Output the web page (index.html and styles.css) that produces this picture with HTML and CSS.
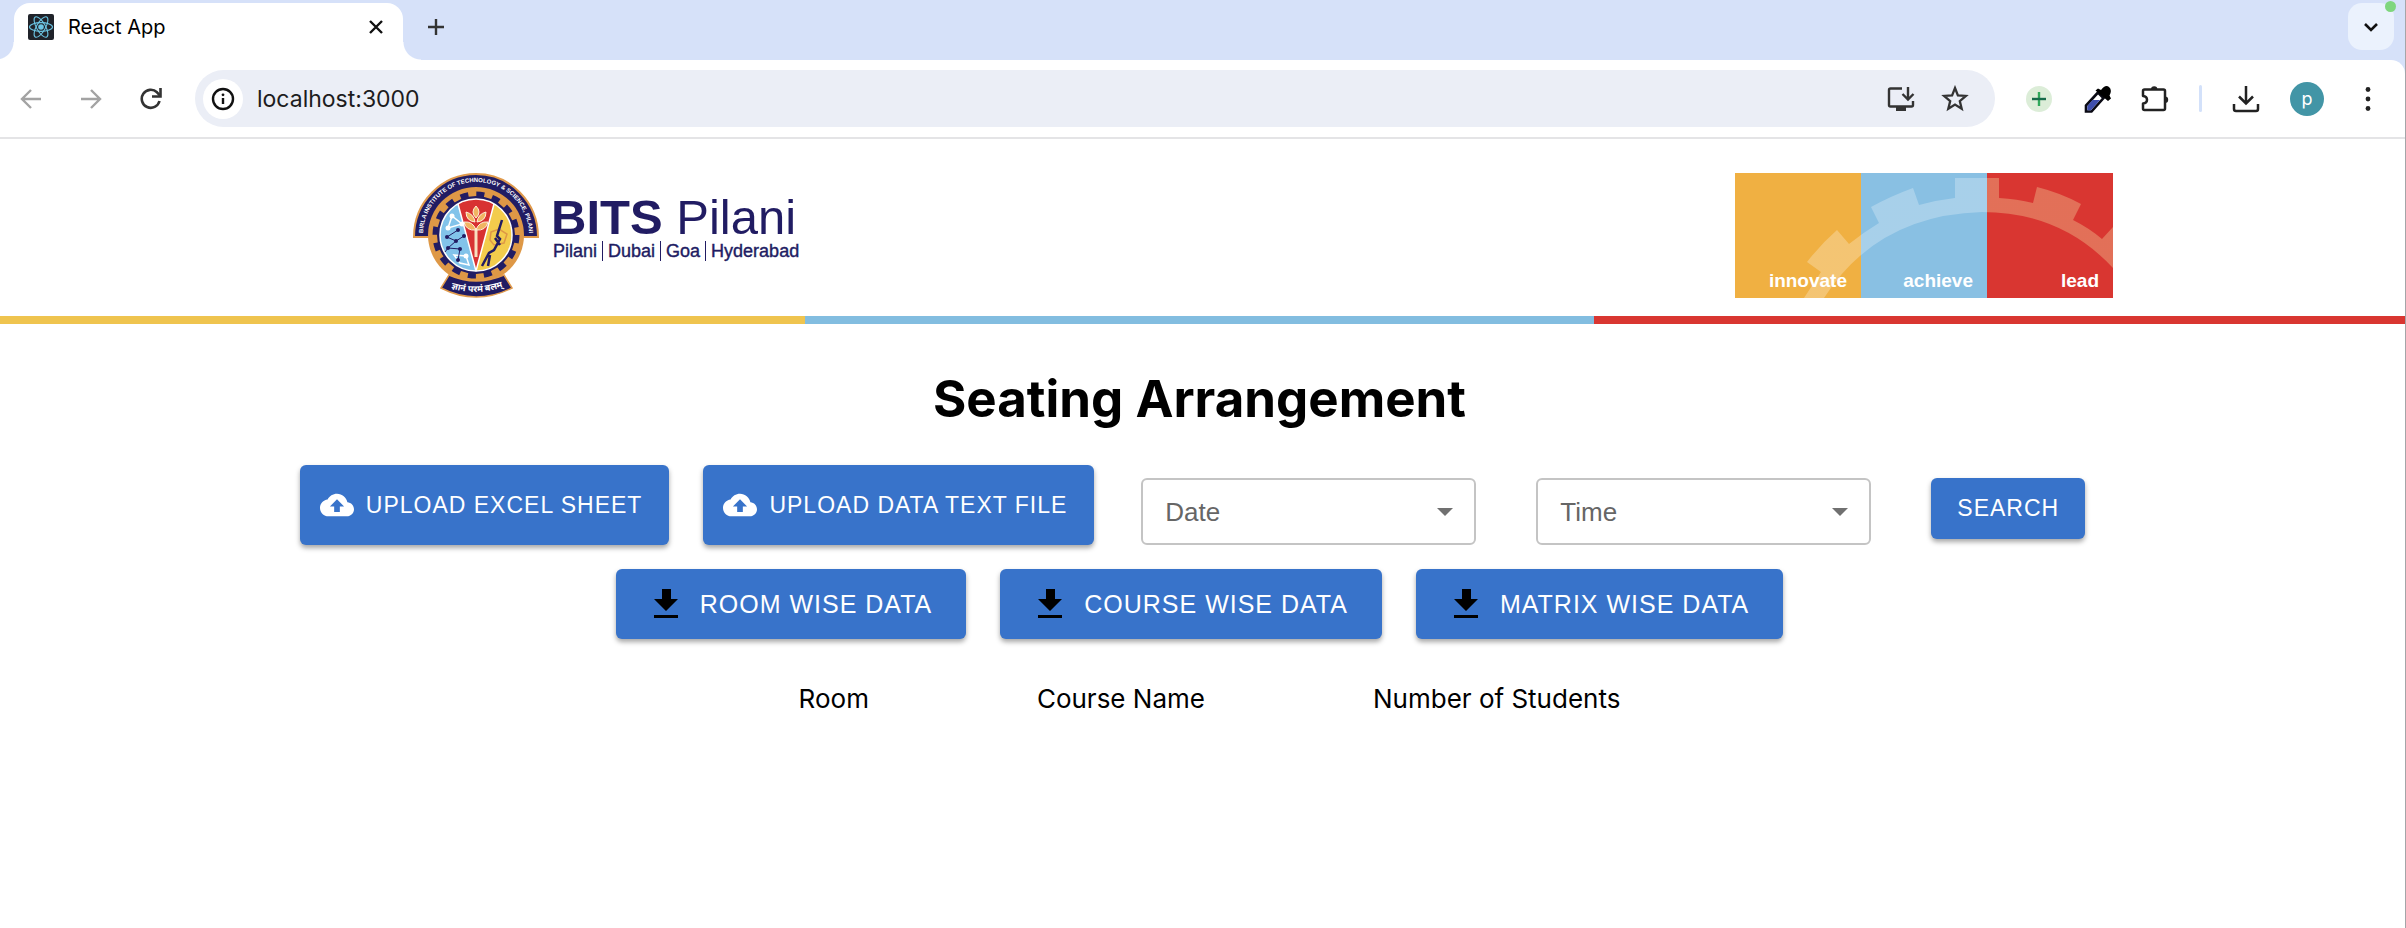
FILE: index.html
```html
<!DOCTYPE html>
<html lang="en">
<head>
<meta charset="utf-8">
<title>React App</title>
<link rel="stylesheet" href="styles.css">
</head>
<body>
<div class="browser">
  <div class="tabstrip">
    <div class="tab">
      <svg class="favicon" viewBox="0 0 26 26" width="26" height="26"><rect width="26" height="26" rx="2" fill="#20232a"/><g fill="none" stroke="#6cc5e4" stroke-width="1.1"><ellipse cx="13" cy="13" rx="11.5" ry="4.4"/><ellipse cx="13" cy="13" rx="11.5" ry="4.4" transform="rotate(60 13 13)"/><ellipse cx="13" cy="13" rx="11.5" ry="4.4" transform="rotate(120 13 13)"/></g><circle cx="13" cy="13" r="2.8" fill="#6cc5e4"/></svg>
      <span class="tab-title">React App</span>
      <button class="icon-btn" aria-label="Close tab"><svg viewBox="0 0 14 14" width="14" height="14"><path d="M1 1l12 12M13 1L1 13" stroke="#111" stroke-width="2.4"/></svg></button>
    </div>
    <button class="icon-btn new-tab" aria-label="New tab"><svg viewBox="0 0 18 18" width="18" height="18"><path d="M9 1v16M1 9h16" stroke="#333" stroke-width="2.4"/></svg></button>
    <button class="icon-btn tab-search" aria-label="Search tabs"><svg viewBox="0 0 16 10" width="16" height="10"><path d="M2 2l6 6 6-6" fill="none" stroke="#111" stroke-width="2.6"/></svg><span class="status-dot"></span></button>
  </div>
  <div class="toolbar">
    <div class="nav">
      <button class="icon-btn" aria-label="Back"><svg viewBox="0 0 22 22" width="22" height="22"><path d="M21 11H2M11 2l-9 9 9 9" fill="none" stroke="#a3a3a3" stroke-width="2.4"/></svg></button>
      <button class="icon-btn" aria-label="Forward"><svg viewBox="0 0 22 22" width="22" height="22"><path d="M1 11h19M11 2l9 9-9 9" fill="none" stroke="#a3a3a3" stroke-width="2.4"/></svg></button>
      <button class="icon-btn" aria-label="Reload"><svg viewBox="0 0 22 22" width="22" height="22"><path d="M19.5 13A9 9 0 1 1 17 4.300L20 7.500" fill="none" stroke="#333" stroke-width="2.6"/><path d="M20.500 0v8.500h-8.500" fill="none" stroke="#333" stroke-width="2.600"/></svg></button>
    </div>
    <div class="omnibox">
      <button class="icon-btn site-info" aria-label="Site information"><svg viewBox="0 0 24 24" width="24" height="24"><circle cx="12" cy="12" r="10" fill="none" stroke="#111" stroke-width="2.400"/><path d="M12 11v6" stroke="#111" stroke-width="2.400"/><circle cx="12" cy="7.800" r="1.400" fill="#111"/></svg></button>
      <input class="url" type="text" aria-label="Address" value="localhost:3000">
      <button class="icon-btn" aria-label="Install app"><svg viewBox="0 0 28 26" width="28" height="26"><path d="M15 2.500H3.500q-1.500 0-1.500 1.500V19q0 1.500 1.500 1.500H24.500q1.500 0 1.500-1.500V15" fill="none" stroke="#333" stroke-width="2.400"/><path d="M9 21h10v4H9z" fill="#333"/><path d="M21 1v12M15.500 8l5.500 5.500L26.500 8" fill="none" stroke="#333" stroke-width="2.400"/></svg></button>
      <button class="icon-btn" aria-label="Bookmark"><svg viewBox="0 0 28 28" width="28" height="28"><path d="M14 3l2.900 7.300 8 .6-6.100 5.200 1.900 7.700L14 19.600l-6.700 4.200 1.900-7.700-6.100-5.200 8-.6z" fill="none" stroke="#333" stroke-width="2.300"/></svg></button>
    </div>
    <div class="actions">
      <button class="icon-btn" aria-label="Add extension"><svg viewBox="0 0 28 28" width="28" height="28"><circle cx="14" cy="14" r="13" fill="#dcedd8"/><path d="M14 7v14" stroke="#31a95b" stroke-width="2.400"/><path d="M7 14h14" stroke="#176b4a" stroke-width="2.400"/></svg></button>
      <button class="icon-btn" aria-label="Color picker"><svg viewBox="0 0 28 28" width="28" height="28"><path d="M3 26.500v-6L15 7.500l5.500 5.500L8.500 26.500z" fill="#fff" stroke="#0a0a14" stroke-width="2.600"/><path d="M4.300 21L9.500 15h7.500L8 25.200H4.300z" fill="#3f4fae"/><path d="M12.500 5.500l2.500-2 3 1.500q4.500-6 8-3t.5 8.500l1.500 3-3 2.500z" fill="#000"/></svg></button>
      <button class="icon-btn" aria-label="Extensions"><svg viewBox="0 0 28 28" width="28" height="28"><path d="M3.500 4.500H22.500q1.500 0 1.500 1.500V23.500q0 1.500-1.500 1.500H3.500q-1.500 0-1.500-1.500V18.500q4-.5 4-3.700t-4-3.700V6Q2 4.500 3.500 4.500z" fill="none" stroke="#222" stroke-width="2.500" stroke-linejoin="round"/><path d="M10 4.500a3.200 3.200 0 0 1 6.400 0zM24 11.500a3.200 3.200 0 0 1 0 6.400z" fill="#222"/></svg></button>
      <span class="divider"></span>
      <button class="icon-btn" aria-label="Downloads"><svg viewBox="0 0 28 28" width="28" height="28"><path d="M14 1v17M7 11.500l7 7 7-7M2 19v5q0 2 2 2h20q2 0 2-2v-5" fill="none" stroke="#222" stroke-width="2.500"/></svg></button>
      <button class="icon-btn avatar" aria-label="Profile">p</button>
      <button class="icon-btn" aria-label="Menu"><svg viewBox="0 0 28 28" width="28" height="28"><g fill="#222"><circle cx="14" cy="4.500" r="2.400"/><circle cx="14" cy="14" r="2.400"/><circle cx="14" cy="23.500" r="2.400"/></g></svg></button>
    </div>
  </div>
</div>

<header class="banner">
  <div class="brand">
    <svg class="emblem" viewBox="0 0 126 126" width="126" height="126" role="img" aria-label="BITS Pilani emblem">
      <defs>
        <path id="ring" d="M10.200 67.600A53 53 0 1 1 115.800 67.600"/>
        <path id="ribbon" d="M30 113.500Q63 127 98 112"/>
      </defs>
      <path d="M1 65A62 63 0 0 1 125 65H108L63 100 17 65z" fill="#211c63" stroke="#e09a4c" stroke-width="2"/>
      <circle cx="63" cy="63" r="48" fill="#de9846"/>
      <circle cx="63" cy="63" r="39" fill="#211c63"/>
      <circle cx="63" cy="63" r="40" fill="none" stroke="#211c63" stroke-width="7" stroke-dasharray="7.900 7.808"/>
      <circle cx="63" cy="63" r="36" fill="#f3cc4c"/>
      <path d="M63 99L45 32A36 36 0 0 0 63 99z" fill="#82c3ea"/>
      <path d="M63 99L45 32Q63 22 81 32z" fill="#d83232"/>
      <path d="M63 99L45 32M63 99l18-67" stroke="#fff" stroke-width="1.500"/>
      <circle cx="63" cy="63" r="36" fill="none" stroke="#fff" stroke-width="1.500"/>
      <path d="M63 56v29" stroke="#f8dfc0" stroke-width="3"/>
      <g fill="#f0b562" stroke="#fff0d8" stroke-width="1"><path d="M63 34q6 6 0 12-6-6 0-12z"/><path d="M53 40q8 2 9 10-9-1-9-10zM73 40q-8 2-9 10 9-1 9-10z"/><path d="M51 50q9-1 12 8-10 1-12-8zM75 50q-9-1-12 8 10 1 12-8z"/></g>
      <g fill="none" stroke="#fff" stroke-width="1.500"><path d="M39 44l-4 12 14-4zM41 83l12 1 3 9-9-2z"/></g>
      <g fill="none" stroke="#211c63" stroke-width="1"><path d="M45 58l-11 7 9 4-8 7 12 1-2 11M43 69l8-5M35 76l-3 4"/></g>
      <g fill="#211c63"><circle cx="45" cy="58" r="2"/><circle cx="34" cy="65" r="2"/><circle cx="43" cy="69" r="2"/><circle cx="51" cy="64" r="2"/><circle cx="35" cy="76" r="2"/><circle cx="47" cy="77" r="2"/><circle cx="45" cy="88" r="2"/></g>
      <g fill="#fff"><circle cx="39" cy="44" r="2.500"/><circle cx="35" cy="56" r="2.500"/><circle cx="49" cy="52" r="2.500"/><circle cx="53" cy="84" r="2.500"/></g>
      <path d="M78 60l8-3 8 5-3 9-10 2-4-5z" fill="none" stroke="#de9846" stroke-width="1.500"/>
      <path d="M89 48l-5 16 3 3-6 11-5 3-7 13M77 83l-2 11M82 66l5 7" fill="none" stroke="#211c63" stroke-width="2.500"/>
      <text class="emblem-text"><textPath href="#ring" startOffset="50%" text-anchor="middle">BIRLA INSTITUTE OF TECHNOLOGY &amp; SCIENCE, PILANI</textPath></text>
      <path d="M36 103Q63 115 91 103L99 116Q63 134 28 116z" fill="#211c63" stroke="#e09a4c" stroke-width="1.500"/>
      <text class="emblem-motto"><textPath href="#ribbon" startOffset="50%" text-anchor="middle">ज्ञानं परमं बलम्</textPath></text>
    </svg>
    <div class="brand-text">
      <div class="brand-name"><strong>BITS</strong> Pilani</div>
      <div class="campuses"><span>Pilani</span><span>Dubai</span><span>Goa</span><span>Hyderabad</span></div>
    </div>
  </div>
  <div class="motto">
    <div class="motto-cell innovate">innovate</div>
    <div class="motto-cell achieve">achieve</div>
    <div class="motto-cell lead">lead</div>
    <svg class="gear" viewBox="0 0 378 125" width="378" height="125">
      <defs><linearGradient id="tint" gradientUnits="userSpaceOnUse" x1="0" y1="0" x2="378" y2="0"><stop offset=".6667" stop-color="#fff" stop-opacity=".26"/><stop offset=".6667" stop-color="#f0c793" stop-opacity=".4"/></linearGradient></defs>
      <path d="M69 125L86 99 72 89Q86 71 102 57L114 71Q129 59 144 50L136 34Q156 23 178 15L184 32Q202 27 220 25V5H264V25Q282 26 298 30L302 14Q326 20 346 31L338 47Q354 55 367 66L378 54V95Q326 39 247 39Q142 42 89 125z" fill="url(#tint)"/>
    </svg>
  </div>
</header>
<div class="stripe"><i class="s-yellow"></i><i class="s-blue"></i><i class="s-red"></i></div>

<main class="page">
  <h1>Seating Arrangement</h1>
  <div class="controls">
    <div class="uploads">
      <button class="btn upload"><svg viewBox="0 0 24 24" width="34" height="34"><path fill="#fff" d="M19.350 10.040C18.670 6.590 15.640 4 12 4 9.110 4 6.600 5.640 5.350 8.040 2.340 8.360 0 10.910 0 14c0 3.310 2.690 6 6 6h13c2.760 0 5-2.240 5-5 0-2.640-2.050-4.780-4.650-4.960zM14 13v4h-4v-4H7l5-5 5 5h-3z"/></svg>UPLOAD EXCEL SHEET</button>
      <button class="btn upload"><svg viewBox="0 0 24 24" width="34" height="34"><path fill="#fff" d="M19.350 10.040C18.670 6.590 15.640 4 12 4 9.110 4 6.600 5.640 5.350 8.040 2.340 8.360 0 10.910 0 14c0 3.310 2.690 6 6 6h13c2.760 0 5-2.240 5-5 0-2.640-2.050-4.780-4.650-4.960zM14 13v4h-4v-4H7l5-5 5 5h-3z"/></svg>UPLOAD DATA TEXT FILE</button>
    </div>
    <div class="filters">
      <div class="field"><select aria-label="Date"><option>Date</option></select><svg class="caret" viewBox="0 0 16 8" width="16" height="8"><path d="M0 0h16L8 8z" fill="#707070"/></svg></div>
      <div class="field"><select aria-label="Time"><option>Time</option></select><svg class="caret" viewBox="0 0 16 8" width="16" height="8"><path d="M0 0h16L8 8z" fill="#707070"/></svg></div>
      <button class="btn search">SEARCH</button>
    </div>
  </div>
  <div class="downloads">
    <button class="btn download"><svg viewBox="0 0 24 30" width="24" height="30"><path d="M8 0h9v10h7L12 22 0 10h8zM0 26h24v3H0z"/></svg>ROOM WISE DATA</button>
    <button class="btn download"><svg viewBox="0 0 24 30" width="24" height="30"><path d="M8 0h9v10h7L12 22 0 10h8zM0 26h24v3H0z"/></svg>COURSE WISE DATA</button>
    <button class="btn download"><svg viewBox="0 0 24 30" width="24" height="30"><path d="M8 0h9v10h7L12 22 0 10h8zM0 26h24v3H0z"/></svg>MATRIX WISE DATA</button>
  </div>
  <table class="results">
    <thead><tr><th>Room</th><th>Course Name</th><th>Number of Students</th></tr></thead>
  </table>
</main>
</body>
</html>
```

FILE: styles.css
```css
* { box-sizing: border-box; }
body {
  margin: 0;
  min-height: 100vh;
  background: #fff;
  color: #000;
  font-family: Inter, "Liberation Sans", sans-serif;
  border-right: 1px solid #a5a5a8;
}
button { font: inherit; border: 0; cursor: pointer; }
svg { display: block; flex: none; }

.icon-btn {
  display: flex;
  align-items: center;
  justify-content: center;
  padding: 0;
  background: none;
}

/* Browser chrome */
.browser { background: #d6e1f9; border-bottom: 2px solid #e4e4e6; }
.tabstrip { display: flex; height: 60px; padding: 3px 11px 0 14px; }
.tab {
  position: relative;
  display: flex;
  align-items: center;
  gap: 14px;
  width: 389px;
  padding: 0 20px 10px 14px;
  border-radius: 16px 16px 0 0;
  background: #fff;
}
.tab::before, .tab::after {
  content: "";
  position: absolute;
  bottom: 0;
  width: 18px;
  height: 18px;
}
.tab::before { right: 100%; background: radial-gradient(circle at 0 0, transparent 17px, #fff 18px); }
.tab::after { left: 100%; background: radial-gradient(circle at 100% 0, transparent 17px, #fff 18px); }
.tab-title { flex: 1; font-size: 20px; }
.new-tab { margin: 0 24px 10px; }
.tab-search {
  position: relative;
  width: 46px;
  height: 47px;
  margin-left: auto;
  border-radius: 14px;
  background: #ebf2fd;
}
.status-dot {
  position: absolute;
  top: -2px;
  right: -2px;
  width: 11px;
  height: 11px;
  border-radius: 50%;
  background: #7fd67e;
}

.toolbar {
  display: flex;
  align-items: center;
  height: 77px;
  padding: 0 23px 0 20px;
  background: #fff;
  border-top-right-radius: 14px;
}
.nav { display: flex; gap: 38px; margin-right: 33px; }
.omnibox {
  display: flex;
  flex: 1;
  align-items: center;
  gap: 26px;
  height: 57px;
  padding: 0 26px 0 8px;
  border-radius: 29px;
  background: #ebeef6;
}
.site-info { width: 40px; height: 40px; border-radius: 50%; background: #fff; }
.url {
  flex: 1;
  min-width: 0;
  margin-left: -12px;
  padding: 0;
  border: 0;
  background: none;
  color: #1c1c20;
  font: 23px Inter, sans-serif;
}
.actions { display: flex; align-items: center; gap: 30px; margin-left: 30px; }
.divider { width: 3px; height: 27px; border-radius: 2px; background: #d3e1fa; }
.avatar { width: 34px; height: 34px; border-radius: 50%; background: #4295a6; color: #fff; font-size: 18px; }

/* Institute banner */
.banner {
  display: flex;
  align-items: center;
  justify-content: space-between;
  padding: 33px 292px 18px 413px;
}
.brand { display: flex; align-items: flex-start; gap: 12px; color: #211c63; }
.emblem-text { fill: #fff; font: bold 6px "Liberation Sans", sans-serif; }
.emblem-motto { fill: #fff; font: bold 9px "Noto Sans", sans-serif; }
.brand-text { padding-top: 21px; font-family: "Liberation Sans", Arial, sans-serif; }
.brand-name { font-size: 49px; line-height: 48px; }
.campuses { display: flex; padding-left: 2px; font-size: 18px; line-height: 20px; -webkit-text-stroke: 0.4px; }
.campuses span + span { margin-left: 5px; padding-left: 5px; border-left: 1px solid; }
.motto {
  position: relative;
  display: grid;
  grid-template-columns: repeat(3, 126px);
  height: 125px;
  color: #fff;
  font: bold 19px "Liberation Sans", Arial, sans-serif;
}
.motto-cell { display: flex; align-items: flex-end; justify-content: flex-end; padding: 0 14px 6px; }
.innovate { background: #f0b042; }
.achieve { background: #89c0e3; }
.lead { background: #d93631; }
.gear { position: absolute; inset: 0; }
.stripe { display: grid; grid-template-columns: 805fr 789fr 811fr; height: 8px; }
.s-yellow { background: #efc44f; }
.s-blue { background: #82bde0; }
.s-red { background: #d93631; }

/* Page */
.page { display: flex; flex-direction: column; align-items: center; padding: 39px 6px 0 0; }
h1 { margin: 0; font-size: 51px; line-height: 72px; font-weight: 700; }
.btn {
  display: flex;
  align-items: center;
  border-radius: 6px;
  background: #3873ca;
  box-shadow: 0 3px 5px rgba(0, 0, 0, .35);
  color: #fff;
  font-family: "Liberation Sans", Arial, sans-serif;
  white-space: nowrap;
}
.controls { display: flex; align-items: flex-end; gap: 47px; margin: 30px 14px 0 0; }
.uploads, .downloads { display: flex; gap: 34px; }
.upload { gap: 12px; height: 80px; padding: 0 27px 0 20px; font-size: 23px; letter-spacing: 1px; }
.filters { display: flex; gap: 60px; }
.field { position: relative; }
.field select {
  width: 335px;
  height: 67px;
  padding: 0 22px;
  appearance: none;
  border: 2px solid #c4c4c4;
  border-radius: 6px;
  background: #fff;
  color: #666;
  font: 26px "Liberation Sans", Arial, sans-serif;
}
.caret { position: absolute; right: 23px; top: 30px; pointer-events: none; }
.search { height: 61px; padding: 0 26px; font-size: 23px; letter-spacing: 1px; }
.downloads { margin-top: 24px; }
.download { gap: 22px; height: 70px; padding: 0 34px 0 38px; font-size: 25px; letter-spacing: 1px; }
.results { margin: 44px 0 0 20px; border-collapse: collapse; font-size: 26px; line-height: 32px; }
.results th { padding: 0 84px; font-weight: 400; }
```
